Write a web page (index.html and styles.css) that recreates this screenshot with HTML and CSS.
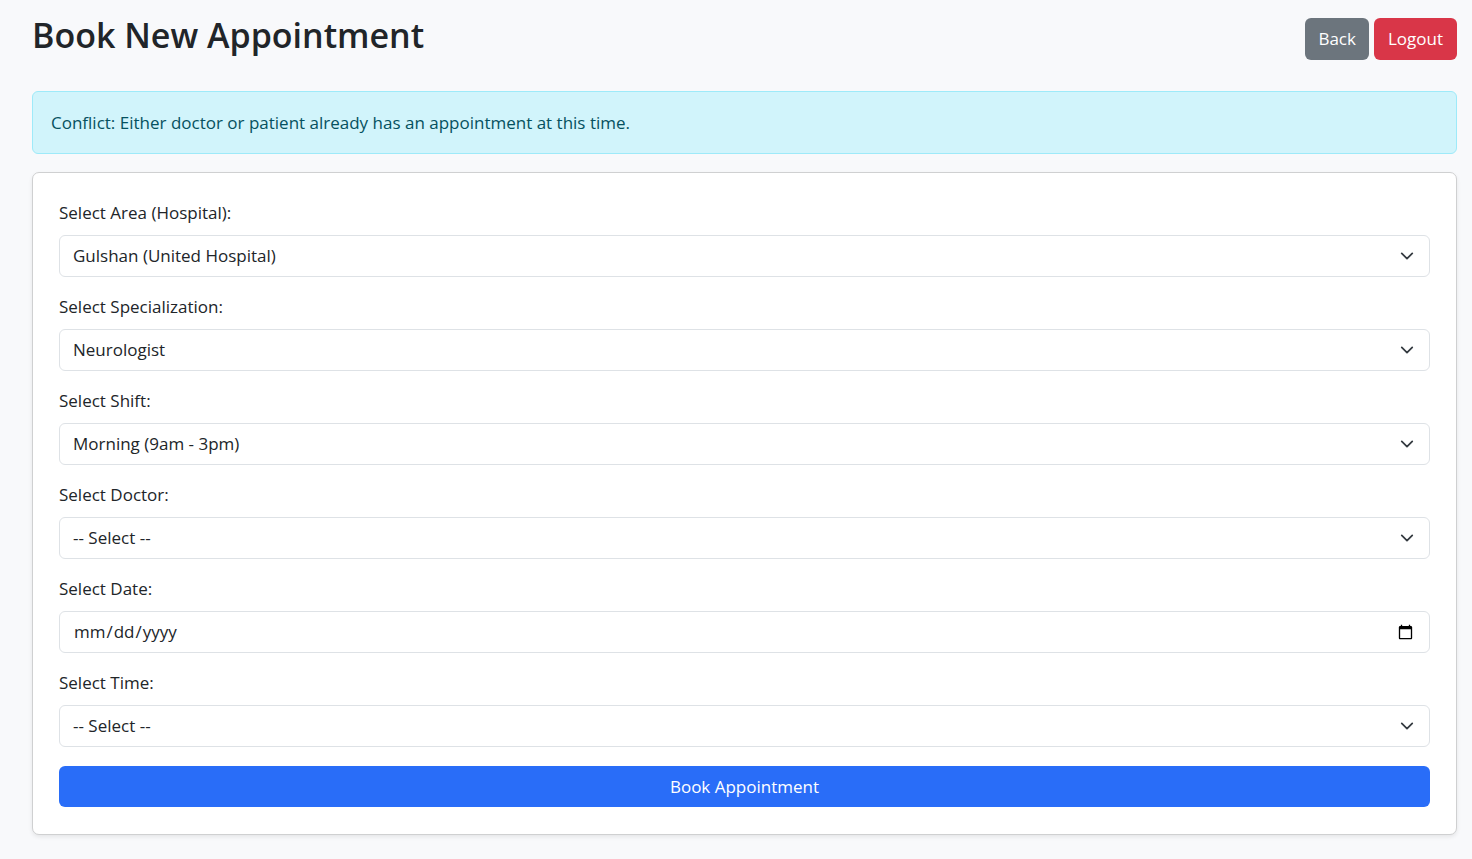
FILE: index.html
```html
<!DOCTYPE html>
<html lang="en">
<head>
  <meta charset="utf-8">
  <meta name="viewport" content="width=device-width, initial-scale=1">
  <title>Book New Appointment</title>
  <link rel="stylesheet" href="styles.css">
</head>
<body class="page">
  <header class="page-header">
    <h1 class="page-title">Book New Appointment</h1>
    <nav class="page-actions">
      <a class="btn btn-secondary" href="#back">Back</a>
      <a class="btn btn-danger" href="#logout">Logout</a>
    </nav>
  </header>
  <main>
    <div class="alert" role="alert">Conflict: Either doctor or patient already has an appointment at this time.</div>
    <form class="card">
      <div class="field">
        <label class="field-label" for="area">Select Area (Hospital):</label>
        <select class="control select" id="area"><option>Gulshan (United Hospital)</option></select>
      </div>
      <div class="field">
        <label class="field-label" for="specialization">Select Specialization:</label>
        <select class="control select" id="specialization"><option>Neurologist</option></select>
      </div>
      <div class="field">
        <label class="field-label" for="shift">Select Shift:</label>
        <select class="control select" id="shift"><option>Morning (9am - 3pm)</option></select>
      </div>
      <div class="field">
        <label class="field-label" for="doctor">Select Doctor:</label>
        <select class="control select" id="doctor"><option>-- Select --</option></select>
      </div>
      <div class="field">
        <label class="field-label" for="date">Select Date:</label>
        <input class="control" id="date" type="date">
      </div>
      <div class="field">
        <label class="field-label" for="time">Select Time:</label>
        <select class="control select" id="time"><option>-- Select --</option></select>
      </div>
      <button class="btn btn-primary" type="submit">Book Appointment</button>
    </form>
  </main>
</body>
</html>
```

FILE: styles.css
```css
*,
*::before,
*::after {
  box-sizing: border-box;
}

.page {
  margin: 0;
  padding: 18px 15px 24px 32px;
  background: #f8f9fb;
  color: #212529;
  font-family: "Segoe UI", "Open Sans", "Noto Sans", sans-serif;
  font-size: 17px;
  line-height: 26px;
}

.page-header {
  display: flex;
  justify-content: space-between;
  align-items: flex-start;
  margin-bottom: 31px;
}

.page-title {
  margin: 0;
  font-size: 34px;
  font-weight: 600;
  line-height: 34px;
}

.page-actions {
  display: flex;
  gap: 5px;
}

.btn {
  padding: 7px 13px;
  border: 1px solid transparent;
  border-radius: 6px;
  color: #fff;
  font: inherit;
  line-height: 26px;
  text-align: center;
  text-decoration: none;
  cursor: pointer;
}

.btn-secondary {
  padding-inline: 12px;
  background: #6c757d;
}

.btn-danger {
  background: #d93648;
}

.btn-primary {
  height: 41px;
  margin-top: 2px;
  padding: 6px 13px;
  background: #296df8;
}

.alert {
  margin-bottom: 18px;
  padding: 18px 18px 17px;
  border: 1px solid #9eeaf9;
  border-radius: 6px;
  background: #d1f4fb;
  color: #055160;
}

.card {
  display: flex;
  flex-direction: column;
  gap: 17px;
  padding: 27px 26px;
  border: 1px solid #cfd0d1;
  border-radius: 7px;
  background: #fff;
  box-shadow: 0 2px 4px rgba(0, 0, 0, 0.08);
}

.field {
  display: flex;
  flex-direction: column;
  gap: 9px;
}

.control {
  width: 100%;
  height: 42px;
  padding: 6px 13px;
  border: 1px solid #dee2e6;
  border-radius: 6px;
  background-color: #fff;
  color: #212529;
  font: inherit;
  line-height: 26px;
  appearance: none;
}

.select {
  padding-right: 40px;
  background-image: url("data:image/svg+xml,%3Csvg xmlns='http://www.w3.org/2000/svg' viewBox='0 0 16 16'%3E%3Cpath fill='none' stroke='%23343a40' stroke-linecap='round' stroke-linejoin='round' stroke-width='2' d='m2 5 6 6 6-6'/%3E%3C/svg%3E");
  background-repeat: no-repeat;
  background-position: right 15px center;
  background-size: 14px 14px;
}
```
